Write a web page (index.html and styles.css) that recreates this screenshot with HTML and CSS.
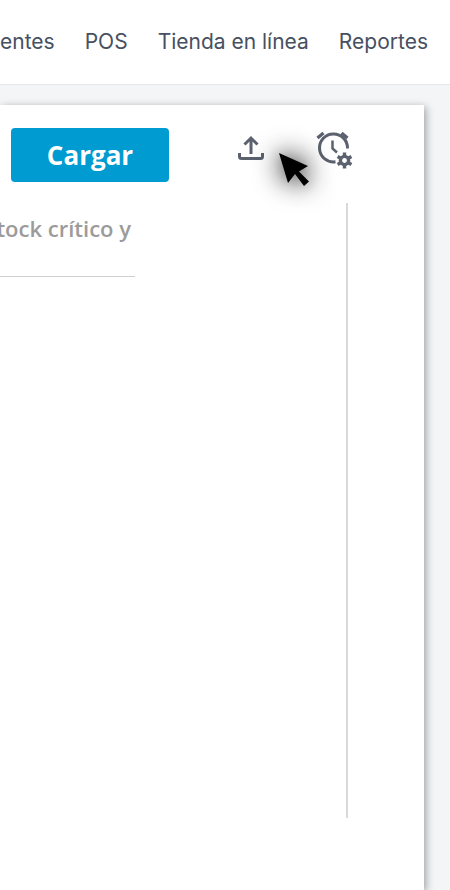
FILE: index.html
```html
<!DOCTYPE html>
<html lang="es">
<head>
<meta charset="UTF-8" />
<meta name="viewport" content="width=device-width, initial-scale=1.0" />
<title>Inventario</title>
<link rel="stylesheet" href="styles.css">
</head>
<body>

<!-- Barra superior -->
<div class="topbar">
  <nav class="topnav">
    <a href="#">Clientes</a>
    <a href="#">POS</a>
    <a href="#">Tienda en línea</a>
    <a href="#">Reportes</a>
  </nav>
</div>

<!-- Contenido -->
<div class="page">
  <div class="card">
    <div class="toolbar">
      <button class="btn-load">Cargar</button>
      <svg class="icon-upload" width="26" height="28" viewBox="0 0 26 28" fill="none" stroke="#5b616e" stroke-width="3">
        <path d="M13 20V5M6.500 10.500L13 4l6.500 6.500" />
        <path d="M1.500 19v3.500a2 2 0 0 0 2 2h19a2 2 0 0 0 2-2V19" />
      </svg>
      <svg class="icon-alarm" width="38" height="38" viewBox="0 0 38 38" fill="none" stroke="#5b616e" stroke-width="3">
        <path d="M19.500 30.800A14 14 0 1 1 31.500 17.500" />
        <path d="M16.500 9.500v8l4.500 4" stroke-width="2.500" />
        <path d="M1.500 7L7.500 2M25.500 2l6 5" stroke-width="3.400" />
        <g stroke-width="3.400">
          <path d="M28.500 21.500v16" />
          <path d="M21.600 25.500l13.800 8" />
          <path d="M21.600 33.500l13.800-8" />
        </g>
        <circle cx="28.500" cy="29.500" r="5.800" fill="#5b616e" stroke="none" />
        <circle cx="28.500" cy="29.500" r="2.400" fill="#fff" stroke="none" />
      </svg>
    </div>
    <div class="body-row">
      <div class="left-col">
        <div class="left-title"><span>Alertas de stock crítico y</span></div>
      </div>
      <div class="side-line"></div>
    </div>
  </div>
</div>

<!-- Cursor encima de todo -->
<svg class="cursor" width="34" height="36" viewBox="0 0 34 36">
  <path d="M1 1L30 14L21 19.500L31 29.500L26 34L17 22L10 31Z" fill="#000" />
</svg>

</body>
</html>
```
FILE: styles.css
```css
html, body {
  height: 100%;
}
body {
  margin: 0;
  background-color: #f4f5f7;
  overflow: hidden;
  font-family: Inter, "Noto Sans", sans-serif;
}
/* Barra superior */
.topbar {
  box-sizing: border-box;
  height: 85px;
  padding-bottom: 1px;
  background-color: #fff;
  border-bottom: 1px solid #e5e7eb;
  display: flex;
  justify-content: flex-end;
  align-items: center;
}
.topnav {
  display: flex;
  gap: 30px;
  padding-right: 22px;
  flex-shrink: 0;
}
.topnav a {
  color: #475060;
  font-size: 21px;
  text-decoration: none;
  white-space: nowrap;
}
/* Tarjeta */
.page {
  padding-top: 20px;
}
.card {
  width: 424px;
  height: 785px;
  background-color: #fff;
  box-shadow: 2px 2px 8px rgba(0, 0, 0, 0.35);
  font-family: "Open Sans", sans-serif;
}
.toolbar {
  display: flex;
  align-items: flex-start;
  padding: 23px 0 0 11px;
}
.btn-load {
  width: 158px;
  height: 54px;
  border: none;
  border-radius: 4px;
  background-color: #009bd0;
  color: #fff;
  font-family: "Open Sans", sans-serif;
  font-size: 26px;
  font-weight: 700;
}
.icon-upload {
  margin: 6px 0 0 69px;
}
.icon-alarm {
  margin: 3px 0 0 52px;
}
.body-row {
  display: flex;
  margin-top: 21px;
}
.left-col {
  width: 135px;
  height: 73px;
  border-bottom: 1px solid #cfcfcf;
  margin-right: 211px;
}
.left-title {
  display: flex;
  justify-content: flex-end;
  padding: 10px 4px 0 0;
  color: #9b9b9b;
  font-size: 22px;
  font-weight: 600;
  white-space: nowrap;
}
.side-line {
  width: 2px;
  height: 615px;
  background-color: #d9d9d9;
}
/* Cursor */
.cursor {
  position: absolute;
  left: 278px;
  top: 152px;
  filter: drop-shadow(0 0 14px rgba(0, 0, 0, 0.95)) drop-shadow(0 0 6px rgba(0, 0, 0, 0.3));
}
```
